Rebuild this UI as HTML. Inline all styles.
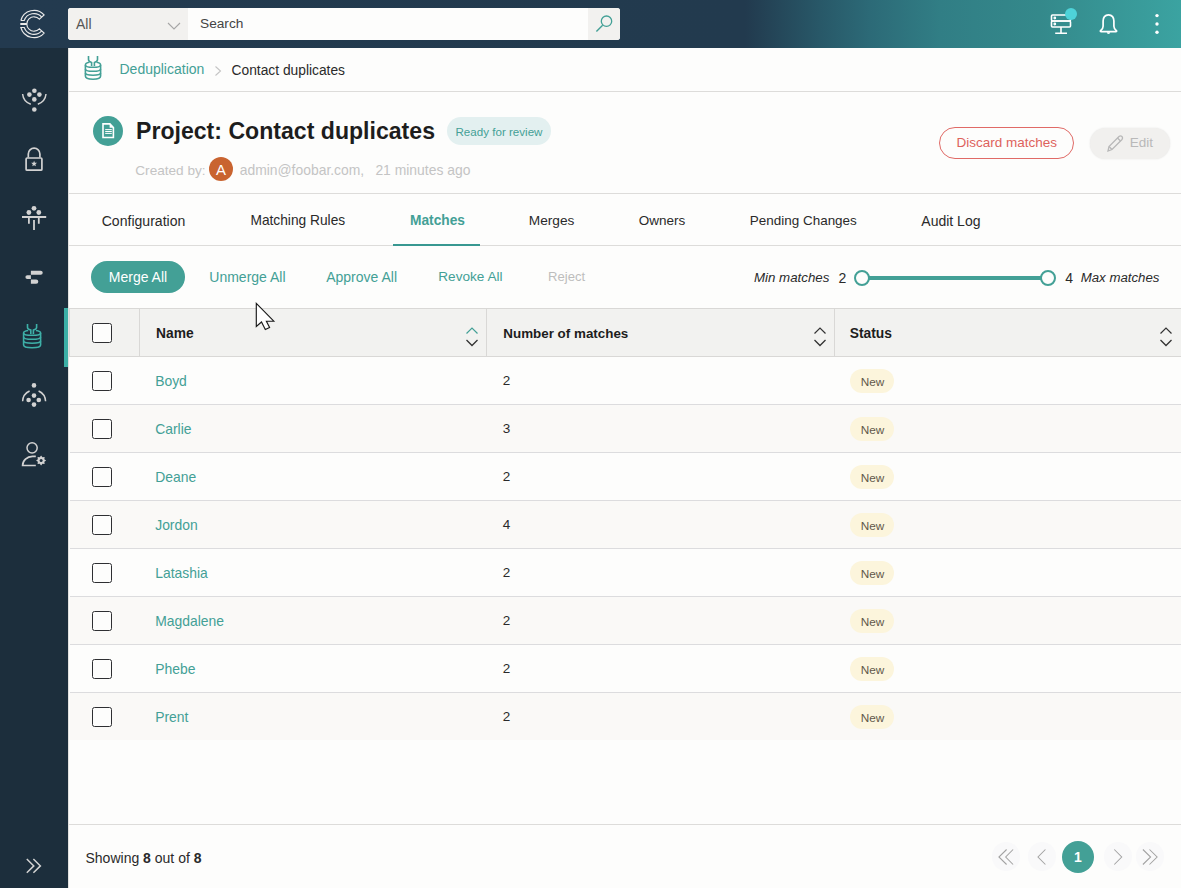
<!DOCTYPE html>
<html><head><meta charset="utf-8">
<style>
*{box-sizing:border-box;margin:0;padding:0}
html,body{width:1181px;height:888px;overflow:hidden;background:#fdfdfc;font-family:"Liberation Sans",sans-serif;color:#222}
.a{position:absolute}
.t{position:absolute;white-space:nowrap;line-height:1}
.hl{position:absolute;height:1px;background:#dddcda}
.cb{position:absolute;width:20px;height:20px;border:1.8px solid #2e2f32;border-radius:2.5px;background:#fdfdfc}
.nb{position:absolute;width:44px;height:24px;border-radius:12px;background:#fcf5dc}
svg{position:absolute;overflow:visible}
</style></head><body>
<div class="a" style="left:0;top:0;width:1181px;height:48px;background:linear-gradient(90deg,#233a4f 0px,#223a4e 745px,#285868 820px,#2c6a77 870px,#317e85 940px,#34898b 1040px,#3ba3a1 1181px)"></div>
<div class="a" style="left:0;top:48px;width:68px;height:840px;background:#1c2e3c"></div>
<div class="a" style="left:68px;top:48px;width:1px;height:840px;background:#e2e1df"></div>
<svg style="left:0;top:0" width="68" height="48" viewBox="0 0 68 48" fill="none" stroke="#e9e9e9" stroke-width="1.15">
<path d="M20.86 20.5 A13.6 13.6 0 0 1 44.1 14.9 L39.35 19.18 A7.2 7.2 0 1 0 39.35 28.82 L44.1 33.1 A13.6 13.6 0 0 1 20.86 27.5 H24.21 A10.4 10.4 0 0 0 41.73 30.96"/>
<path d="M20.86 20.5 H24.21 A10.4 10.4 0 0 1 41.73 17.04"/>
<path d="M20.3 24 H26.9" stroke-width="2"/>
</svg>
<div class="a" style="left:68px;top:8px;width:552px;height:32px;background:#fdfdfc;border-radius:3px;overflow:hidden">
<div class="a" style="left:0;top:0;width:120px;height:32px;background:#f2f1ef"></div>
<div class="a" style="left:520px;top:0;width:32px;height:32px;background:#f2f1ef"></div>
</div>
<div class="t" style="left:76px;top:16.86px;font-size:14px;color:#555;font-weight:normal;font-style:normal;">All</div>
<svg style="left:166px;top:20.6px" width="16" height="10"><path d="M2 2 L8 8 L14 2" fill="none" stroke="#a6a6a6" stroke-width="1.1"/></svg>
<div class="t" style="left:200px;top:16.89px;font-size:13.7px;color:#444;font-weight:normal;font-style:normal;">Search</div>
<svg style="left:590px;top:10px" width="28" height="28"><circle cx="16.5" cy="11.2" r="5.2" fill="none" stroke="#43a096" stroke-width="1.3"/><path d="M12.6 15.3 L6.4 21.6" stroke="#43a096" stroke-width="1.4"/></svg>
<svg style="left:1048px;top:10px" width="30" height="28" viewBox="0 0 30 28" fill="none" stroke="#fff" stroke-width="1.6">
<rect x="3.5" y="5" width="19" height="6" rx="1"/><rect x="3.5" y="11" width="19" height="6" rx="1"/>
<circle cx="6.8" cy="8" r="0.6" fill="#fff"/><circle cx="6.8" cy="14" r="0.6" fill="#fff"/>
<path d="M13 17 V23 M7.2 23.2 H19"/>
<circle cx="23" cy="4" r="6" fill="#4ed3d8" stroke="none"/>
</svg>
<svg style="left:1096px;top:10px" width="26" height="28" viewBox="0 0 26 28" fill="none" stroke="#fff" stroke-width="1.5">
<path d="M12.5 4.8 C8.9 4.8 7.1 7.6 7.1 11 V16.2 C7.1 18.2 5.8 19.6 4.6 20.6 Q3.9 21.6 5.2 21.6 H19.8 Q21.1 21.6 20.4 20.6 C19.2 19.6 17.9 18.2 17.9 16.2 V11 C17.9 7.6 16.1 4.8 12.5 4.8 Z" stroke-width="1.7"/>
<path d="M10.8 22.3 A1.7 1.7 0 0 0 14.2 22.3 Z" fill="#fff" stroke="none"/>
</svg>
<svg style="left:1150px;top:10px" width="14" height="28"><circle cx="7" cy="5.6" r="1.7" fill="#fff"/><circle cx="7" cy="14" r="1.7" fill="#fff"/><circle cx="7" cy="22.2" r="1.7" fill="#fff"/></svg>
<svg style="left:78px;top:50px" width="30" height="36" viewBox="0 0 30 36" fill="none" stroke="#43a096" stroke-width="1.6">
<path d="M10.5 6 V9.5 Q10.5 11.5 13.6 12.5 V16"/><path d="M19.5 6 V9.5 Q19.5 11.5 16.4 12.5 V16"/>
<path d="M11.5 12.2 C8.8 12.6 7.4 13.6 7.4 15 V26 C7.4 28 10.7 29.2 15 29.2 C19.3 29.2 22.6 28 22.6 26 V15 C22.6 13.6 21.2 12.6 18.5 12.2"/>
<path d="M7.4 15 C7.4 16.5 10.7 17.3 15 17.3 C19.3 17.3 22.6 16.5 22.6 15"/>
<path d="M7.4 19 C7.4 20.6 10.7 21.3 15 21.3 C19.3 21.3 22.6 20.6 22.6 19"/>
<path d="M7.4 23 C7.4 24.6 10.7 25.2 15 25.2 C19.3 25.2 22.6 24.6 22.6 23"/>
</svg>
<div class="t" style="left:119.5px;top:62.35px;font-size:14px;color:#43a096;font-weight:normal;font-style:normal;">Deduplication</div>
<svg style="left:212px;top:64px" width="12" height="14"><path d="M3.5 2.5 L8.5 7 L3.5 11.5" fill="none" stroke="#c4c4c4" stroke-width="1.1"/></svg>
<div class="t" style="left:231.5px;top:64.38px;font-size:13.8px;color:#2a2a2a;font-weight:normal;font-style:normal;">Contact duplicates</div>
<div class="hl" style="left:69px;top:91px;width:1112px"></div>
<div class="a" style="left:93px;top:116px;width:30px;height:30px;border-radius:50%;background:#43a096"></div>
<svg style="left:93px;top:116px" width="30" height="30" viewBox="0 0 30 30">
<path d="M10 7.9 H16.8 L20.4 11.5 V21.5 H10 Z" fill="none" stroke="#fff" stroke-width="1.6"/>
<path d="M16.6 7.1 L21.2 11.7 H16.6 Z" fill="#fff"/>
<path d="M12.2 13.6 H18.8 M12.2 15.5 H18.8 M12.2 17.4 H18.8" stroke="#fff" stroke-width="1"/>
</svg>
<div class="t" style="left:136px;top:120.29px;font-size:23.1px;color:#1d1d1d;font-weight:bold;font-style:normal;">Project: Contact duplicates</div>
<div class="a" style="left:447px;top:117px;width:104px;height:28px;border-radius:14px;background:#e3f0f0"></div>
<div class="t" style="left:455.5px;top:125.94px;font-size:11.6px;color:#43a096;font-weight:normal;font-style:normal;">Ready for review</div>
<div class="t" style="left:135.3px;top:163.90px;font-size:13.6px;color:#c4c4c4;font-weight:normal;font-style:normal;">Created by:</div>
<div class="a" style="left:209px;top:157px;width:24px;height:24px;border-radius:50%;background:#c96430"></div>
<div class="t" style="left:-79px;width:600px;text-align:center;top:162.44px;font-size:15px;color:#fff;font-weight:normal;font-style:normal;">A</div>
<div class="t" style="left:239.7px;top:163.87px;font-size:13.9px;color:#c4c4c4;font-weight:normal;font-style:normal;">admin@foobar.com,</div>
<div class="t" style="left:375.4px;top:163.87px;font-size:13.9px;color:#c4c4c4;font-weight:normal;font-style:normal;">21 minutes ago</div>
<div class="a" style="left:939px;top:127px;width:135px;height:32px;border-radius:16px;border:1.2px solid #e06a66;background:#fdfdfc"></div>
<div class="t" style="left:956.4px;top:136.41px;font-size:13.5px;color:#de625c;font-weight:normal;font-style:normal;">Discard matches</div>
<div class="a" style="left:1090px;top:128px;width:80px;height:30.5px;border-radius:16px;background:#f1f0ee;box-shadow:0 0 2px rgba(0,0,0,0.10)"></div>
<svg style="left:1104px;top:132px" width="22" height="22" viewBox="0 0 22 22" fill="none" stroke="#b8b8b8" stroke-width="1.3">
<path d="M4 19 L5 14.5 L15 4.5 Q16.5 3.3 18 4.5 Q19.2 6 18 7.5 L8 17.5 Z"/><path d="M13.5 6 L16.5 9"/><path d="M5 14.5 L8 17.5"/>
</svg>
<div class="t" style="left:1129.8px;top:136.41px;font-size:13.5px;color:#b9b9b9;font-weight:normal;font-style:normal;">Edit</div>
<div class="hl" style="left:69px;top:193px;width:1112px"></div>
<div class="t" style="left:-156.5px;width:600px;text-align:center;top:214.35px;font-size:14.05px;color:#2a2a2a;font-weight:normal;font-style:normal;">Configuration</div>
<div class="t" style="left:-2.1999999999999886px;width:600px;text-align:center;top:214.38px;font-size:13.75px;color:#2a2a2a;font-weight:normal;font-style:normal;">Matching Rules</div>
<div class="t" style="left:137.5px;width:600px;text-align:center;top:214.39px;font-size:13.74px;color:#43a096;font-weight:bold;font-style:normal;">Matches</div>
<div class="t" style="left:251.60000000000002px;width:600px;text-align:center;top:214.39px;font-size:13.7px;color:#2a2a2a;font-weight:normal;font-style:normal;">Merges</div>
<div class="t" style="left:362px;width:600px;text-align:center;top:214.41px;font-size:13.5px;color:#2a2a2a;font-weight:normal;font-style:normal;">Owners</div>
<div class="t" style="left:503.29999999999995px;width:600px;text-align:center;top:214.42px;font-size:13.47px;color:#2a2a2a;font-weight:normal;font-style:normal;">Pending Changes</div>
<div class="t" style="left:650.9px;width:600px;text-align:center;top:214.35px;font-size:14.0px;color:#2a2a2a;font-weight:normal;font-style:normal;">Audit Log</div>
<div class="hl" style="left:69px;top:245px;width:1112px"></div>
<div class="a" style="left:393px;top:244px;width:87px;height:2px;background:#389891"></div>
<div class="a" style="left:91px;top:261px;width:94px;height:32px;border-radius:16px;background:#43a096"></div>
<div class="t" style="left:-162px;width:600px;text-align:center;top:269.96px;font-size:14px;color:#fff;font-weight:normal;font-style:normal;">Merge All</div>
<div class="t" style="left:209.3px;top:269.96px;font-size:14px;color:#43a096;font-weight:normal;font-style:normal;">Unmerge All</div>
<div class="t" style="left:326.2px;top:269.96px;font-size:14px;color:#43a096;font-weight:normal;font-style:normal;">Approve All</div>
<div class="t" style="left:438.3px;top:270.00px;font-size:13.6px;color:#43a096;font-weight:normal;font-style:normal;">Revoke All</div>
<div class="t" style="left:548.1px;top:270.06px;font-size:13.1px;color:#bdbdbd;font-weight:normal;font-style:normal;">Reject</div>
<div class="t" style="left:754px;top:271.04px;font-size:13.3px;color:#2a2a2a;font-weight:normal;font-style:italic;">Min matches</div>
<div class="t" style="left:838.6px;top:270.75px;font-size:14px;color:#2a2a2a;font-weight:normal;font-style:normal;">2</div>
<div class="a" style="left:862px;top:276px;width:186px;height:4px;background:#43a096"></div>
<div class="a" style="left:854px;top:270px;width:16px;height:16px;border-radius:50%;border:2px solid #43a096;background:#fdfdfc"></div>
<div class="a" style="left:1040px;top:270px;width:16px;height:16px;border-radius:50%;border:2px solid #43a096;background:#fdfdfc"></div>
<div class="t" style="left:1065.3px;top:270.75px;font-size:14px;color:#2a2a2a;font-weight:normal;font-style:normal;">4</div>
<div class="t" style="left:1080.7px;top:271.04px;font-size:13.25px;color:#2a2a2a;font-weight:normal;font-style:italic;">Max matches</div>
<div class="a" style="left:69px;top:308px;width:1112px;height:49px;background:#f2f2f0;border-top:1px solid #d9d8d6;border-bottom:1px solid #d9d8d6;border-left:1px solid #dcdbd9"></div>
<div class="a" style="left:139px;top:309px;width:1px;height:47px;background:#d9d8d6"></div>
<div class="a" style="left:486px;top:309px;width:1px;height:47px;background:#d9d8d6"></div>
<div class="a" style="left:834px;top:309px;width:1px;height:47px;background:#d9d8d6"></div>
<div class="cb" style="left:92px;top:323px"></div>
<div class="t" style="left:156px;top:327.38px;font-size:13.8px;color:#1d1d1d;font-weight:bold;font-style:normal;">Name</div>
<div class="t" style="left:503.3px;top:327.43px;font-size:13.4px;color:#1d1d1d;font-weight:bold;font-style:normal;">Number of matches</div>
<div class="t" style="left:849.8px;top:327.38px;font-size:13.8px;color:#1d1d1d;font-weight:bold;font-style:normal;">Status</div>
<svg style="left:465px;top:325px" width="14" height="24"><path d="M1.5 8.5 L7 3 L12.5 8.5" fill="none" stroke="#43a096" stroke-width="1.2"/><path d="M1.5 15 L7 20.5 L12.5 15" fill="none" stroke="#333" stroke-width="1.3"/></svg>
<svg style="left:813px;top:325px" width="14" height="24"><path d="M1.5 8.5 L7 3 L12.5 8.5" fill="none" stroke="#333" stroke-width="1.2"/><path d="M1.5 15 L7 20.5 L12.5 15" fill="none" stroke="#333" stroke-width="1.3"/></svg>
<svg style="left:1159px;top:325px" width="14" height="24"><path d="M1.5 8.5 L7 3 L12.5 8.5" fill="none" stroke="#333" stroke-width="1.2"/><path d="M1.5 15 L7 20.5 L12.5 15" fill="none" stroke="#333" stroke-width="1.3"/></svg>
<div class="a" style="left:70px;top:357px;width:1111px;height:47px;background:#fdfdfc"></div>
<div class="cb" style="left:92px;top:371px"></div>
<div class="t" style="left:155.2px;top:374.67px;font-size:13.9px;color:#43a096;font-weight:normal;font-style:normal;">Boyd</div>
<div class="t" style="left:502.8px;top:373.91px;font-size:13.5px;color:#2a2a2a;font-weight:normal;font-style:normal;">2</div>
<div class="nb" style="left:850px;top:369px"></div>
<div class="t" style="left:860.7px;top:375.62px;font-size:11.75px;color:#62584a;font-weight:normal;font-style:normal;">New</div>
<div class="a" style="left:70px;top:404px;width:1111px;height:1px;background:#dcdcde"></div>
<div class="a" style="left:70px;top:405px;width:1111px;height:47px;background:#faf9f7"></div>
<div class="cb" style="left:92px;top:419px"></div>
<div class="t" style="left:155.2px;top:422.67px;font-size:13.9px;color:#43a096;font-weight:normal;font-style:normal;">Carlie</div>
<div class="t" style="left:502.8px;top:421.91px;font-size:13.5px;color:#2a2a2a;font-weight:normal;font-style:normal;">3</div>
<div class="nb" style="left:850px;top:417px"></div>
<div class="t" style="left:860.7px;top:423.62px;font-size:11.75px;color:#62584a;font-weight:normal;font-style:normal;">New</div>
<div class="a" style="left:70px;top:452px;width:1111px;height:1px;background:#dcdcde"></div>
<div class="a" style="left:70px;top:453px;width:1111px;height:47px;background:#fdfdfc"></div>
<div class="cb" style="left:92px;top:467px"></div>
<div class="t" style="left:155.2px;top:470.67px;font-size:13.9px;color:#43a096;font-weight:normal;font-style:normal;">Deane</div>
<div class="t" style="left:502.8px;top:469.91px;font-size:13.5px;color:#2a2a2a;font-weight:normal;font-style:normal;">2</div>
<div class="nb" style="left:850px;top:465px"></div>
<div class="t" style="left:860.7px;top:471.62px;font-size:11.75px;color:#62584a;font-weight:normal;font-style:normal;">New</div>
<div class="a" style="left:70px;top:500px;width:1111px;height:1px;background:#dcdcde"></div>
<div class="a" style="left:70px;top:501px;width:1111px;height:47px;background:#faf9f7"></div>
<div class="cb" style="left:92px;top:515px"></div>
<div class="t" style="left:155.2px;top:518.67px;font-size:13.9px;color:#43a096;font-weight:normal;font-style:normal;">Jordon</div>
<div class="t" style="left:502.8px;top:517.91px;font-size:13.5px;color:#2a2a2a;font-weight:normal;font-style:normal;">4</div>
<div class="nb" style="left:850px;top:513px"></div>
<div class="t" style="left:860.7px;top:519.62px;font-size:11.75px;color:#62584a;font-weight:normal;font-style:normal;">New</div>
<div class="a" style="left:70px;top:548px;width:1111px;height:1px;background:#dcdcde"></div>
<div class="a" style="left:70px;top:549px;width:1111px;height:47px;background:#fdfdfc"></div>
<div class="cb" style="left:92px;top:563px"></div>
<div class="t" style="left:155.2px;top:566.67px;font-size:13.9px;color:#43a096;font-weight:normal;font-style:normal;">Latashia</div>
<div class="t" style="left:502.8px;top:565.91px;font-size:13.5px;color:#2a2a2a;font-weight:normal;font-style:normal;">2</div>
<div class="nb" style="left:850px;top:561px"></div>
<div class="t" style="left:860.7px;top:567.62px;font-size:11.75px;color:#62584a;font-weight:normal;font-style:normal;">New</div>
<div class="a" style="left:70px;top:596px;width:1111px;height:1px;background:#dcdcde"></div>
<div class="a" style="left:70px;top:597px;width:1111px;height:47px;background:#faf9f7"></div>
<div class="cb" style="left:92px;top:611px"></div>
<div class="t" style="left:155.2px;top:614.67px;font-size:13.9px;color:#43a096;font-weight:normal;font-style:normal;">Magdalene</div>
<div class="t" style="left:502.8px;top:613.91px;font-size:13.5px;color:#2a2a2a;font-weight:normal;font-style:normal;">2</div>
<div class="nb" style="left:850px;top:609px"></div>
<div class="t" style="left:860.7px;top:615.62px;font-size:11.75px;color:#62584a;font-weight:normal;font-style:normal;">New</div>
<div class="a" style="left:70px;top:644px;width:1111px;height:1px;background:#dcdcde"></div>
<div class="a" style="left:70px;top:645px;width:1111px;height:47px;background:#fdfdfc"></div>
<div class="cb" style="left:92px;top:659px"></div>
<div class="t" style="left:155.2px;top:662.67px;font-size:13.9px;color:#43a096;font-weight:normal;font-style:normal;">Phebe</div>
<div class="t" style="left:502.8px;top:661.91px;font-size:13.5px;color:#2a2a2a;font-weight:normal;font-style:normal;">2</div>
<div class="nb" style="left:850px;top:657px"></div>
<div class="t" style="left:860.7px;top:663.62px;font-size:11.75px;color:#62584a;font-weight:normal;font-style:normal;">New</div>
<div class="a" style="left:70px;top:692px;width:1111px;height:1px;background:#dcdcde"></div>
<div class="a" style="left:70px;top:693px;width:1111px;height:47px;background:#faf9f7"></div>
<div class="cb" style="left:92px;top:707px"></div>
<div class="t" style="left:155.2px;top:710.67px;font-size:13.9px;color:#43a096;font-weight:normal;font-style:normal;">Prent</div>
<div class="t" style="left:502.8px;top:709.91px;font-size:13.5px;color:#2a2a2a;font-weight:normal;font-style:normal;">2</div>
<div class="nb" style="left:850px;top:705px"></div>
<div class="t" style="left:860.7px;top:711.62px;font-size:11.75px;color:#62584a;font-weight:normal;font-style:normal;">New</div>
<div class="hl" style="left:69px;top:824px;width:1112px"></div>
<div class="t" style="left:85.5px;top:851.36px;font-size:14px;color:#2a2a2a;font-weight:normal;font-style:normal;">Showing <b>8</b> out of <b>8</b></div>
<div class="a" style="left:991.8px;top:842.4px;width:28.4px;height:28.4px;border-radius:50%;background:#f9f9fa"></div>
<div class="a" style="left:1027.5px;top:842.4px;width:28.4px;height:28.4px;border-radius:50%;background:#f9f9fa"></div>
<div class="a" style="left:1103.8px;top:842.4px;width:28.4px;height:28.4px;border-radius:50%;background:#f9f9fa"></div>
<div class="a" style="left:1135.8px;top:842.4px;width:28.4px;height:28.4px;border-radius:50%;background:#f9f9fa"></div>
<div class="a" style="left:1062px;top:841px;width:32px;height:32px;border-radius:50%;background:#43a096"></div>
<div class="t" style="left:778px;width:600px;text-align:center;top:850.36px;font-size:14px;color:#fff;font-weight:bold;font-style:normal;">1</div>
<svg style="left:990px;top:842px" width="180" height="30" fill="none" stroke="#a2a2a2" stroke-width="1.05">
<path d="M16.6 7.5 L8.9 15 L16.6 22.5 M23.1 7.5 L15.7 15 L23.1 22.5"/>
<path d="M55.4 7.5 L48 15 L55.4 22.5"/>
<path d="M124.3 7.5 L131.7 15 L124.3 22.5"/>
<path d="M152.9 7.5 L160.6 15 L152.9 22.5 M159.5 7.5 L167.1 15 L159.5 22.5"/>
</svg>
<svg style="left:0;top:48px" width="68" height="840" viewBox="0 48 68 840" fill="none" stroke="#d2d2d2" stroke-width="1.5">
<g fill="#d2d2d2" stroke="none">
<circle cx="34.4" cy="90.7" r="2.3"/><circle cx="29.4" cy="94.6" r="2.3"/><circle cx="39.4" cy="94.6" r="2.3"/><circle cx="34.3" cy="99.4" r="2.3"/><circle cx="34.3" cy="109.5" r="2.3"/>
</g>
<path d="M22.6 94 A12 12 0 0 0 30.8 104.2"/><path d="M46 94 A12 12 0 0 1 37.8 104.2"/>
<path d="M28.3 157.5 V154 A5.8 5.8 0 0 1 39.9 154 V157.5" stroke-width="1.7"/>
<rect x="26.1" y="158" width="15.8" height="12.2" rx="1" stroke-width="1.7"/>
<path d="M34.10 160.70 L34.89 162.71 L37.05 162.84 L35.38 164.22 L35.92 166.31 L34.10 165.15 L32.28 166.31 L32.82 164.22 L31.15 162.84 L33.31 162.71 Z" fill="#d2d2d2" stroke="none"/>
<g fill="#d2d2d2" stroke="none"><circle cx="34" cy="208.3" r="2.4"/><circle cx="28.9" cy="212.5" r="2.4"/><circle cx="38.8" cy="212.5" r="2.4"/></g>
<path d="M22 217 H46.2" stroke-width="2"/><path d="M28.9 217 V223.7 M38.8 217 V223.7 M34 220 V230" stroke-width="1.8"/>
<g fill="#d2d2d2" stroke="none">
<path d="M30.9 270.8 H40.7 A2 2 0 0 1 40.7 274.8 H30.9 Z"/>
<path d="M30.9 275.2 H27.3 A1.9 1.9 0 0 0 27.3 279 H30.9 Z"/>
<path d="M30.9 279.6 H36.2 A2.1 2.1 0 0 1 36.2 283.8 H30.9 Z"/>
</g>
<g fill="#d2d2d2" stroke="none"><circle cx="34" cy="385.4" r="2.3"/><circle cx="34" cy="395.6" r="2.3"/><circle cx="28.6" cy="400" r="2.3"/><circle cx="38.8" cy="400" r="2.3"/><circle cx="34" cy="404.6" r="2.3"/></g>
<path d="M22.6 401.2 A12 12 0 0 1 29.6 391"/><path d="M45.6 401.2 A12 12 0 0 0 38.6 391"/>
<circle cx="32.1" cy="447.8" r="5.1"/>
<path d="M35.8 456.3 H32.5 A10.2 9.2 0 0 0 22.6 465.5 H35.8" stroke-width="1.7"/>
<path d="M26.8 859 L33.8 865.9 L26.8 872.8 M33.4 859 L40.4 865.9 L33.4 872.8"/>
</svg>
<svg style="left:0;top:0" width="68" height="888"><polygon points="41.10,455.50 42.44,457.27 44.64,456.96 44.33,459.16 46.10,460.50 44.33,461.84 44.64,464.04 42.44,463.73 41.10,465.50 39.76,463.73 37.56,464.04 37.87,461.84 36.10,460.50 37.87,459.16 37.56,456.96 39.76,457.27" fill="#d2d2d2"/><circle cx="41.1" cy="460.5" r="1.5" fill="#1c2e3c"/></svg>
<div class="a" style="left:64px;top:308px;width:4px;height:59px;background:#3cafa6"></div>
<svg style="left:0;top:0" width="68" height="888" fill="none" stroke="#3eb0a8" stroke-width="1.6">
<path d="M27.5 324 V327.4 Q27.5 329 30.8 330 V334"/><path d="M36.6 324 V327.4 Q36.6 329 33.4 330 V334"/>
<path d="M28.2 330.5 C25.3 330.9 23.6 331.8 23.6 332.9 V345 C23.6 346.6 27.4 347.7 32.1 347.7 C36.8 347.7 40.6 346.6 40.6 345 V332.9 C40.6 331.8 38.9 330.9 36 330.5"/>
<path d="M23.6 332.9 C23.6 334.4 27.4 335.3 32.1 335.3 C36.8 335.3 40.6 334.4 40.6 332.9"/>
<path d="M23.6 337 C23.6 338.5 27.4 339.3 32.1 339.3 C36.8 339.3 40.6 338.5 40.6 337"/>
<path d="M23.6 341 C23.6 342.5 27.4 343.2 32.1 343.2 C36.8 343.2 40.6 342.5 40.6 341"/>
</svg>
<svg style="left:255px;top:302px" width="20" height="30" viewBox="0 0 20 30">
<path d="M1.3 1.3 V24.5 L6.5 20 L10.3 27.4 L14.6 25.4 L11.4 19.2 H18.8 Z" fill="#fff" stroke="#1a1a1a" stroke-width="1.15" stroke-linejoin="miter"/>
</svg>
</body></html>
